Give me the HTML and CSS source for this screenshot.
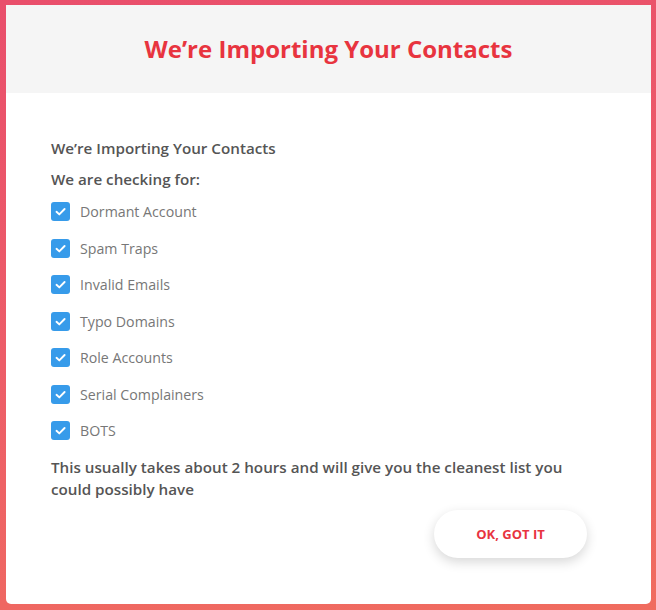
FILE: index.html
```html
<!DOCTYPE html>
<html>
<head>
<meta charset="utf-8">
<link rel="stylesheet" href="styles.css">
</head>
<body>
<div class="page">
  <div class="modal">
    <div class="modal-header">
      <h1 class="title">We’re Importing Your Contacts</h1>
    </div>
    <div class="modal-body">
      <p class="lead">We’re Importing Your Contacts</p>
      <p class="lead sub">We are checking for:</p>
      <ul class="checks">
        <li class="check"><span class="box"><svg viewBox="0 0 19 19" width="19" height="19"><path d="M5.5 9.8 L8.3 12.4 L13.6 7" fill="none" stroke="#fff" stroke-width="1.9" stroke-linecap="round" stroke-linejoin="round"/></svg></span>Dormant Account</li>
        <li class="check"><span class="box"><svg viewBox="0 0 19 19" width="19" height="19"><path d="M5.5 9.8 L8.3 12.4 L13.6 7" fill="none" stroke="#fff" stroke-width="1.9" stroke-linecap="round" stroke-linejoin="round"/></svg></span>Spam Traps</li>
        <li class="check"><span class="box"><svg viewBox="0 0 19 19" width="19" height="19"><path d="M5.5 9.8 L8.3 12.4 L13.6 7" fill="none" stroke="#fff" stroke-width="1.9" stroke-linecap="round" stroke-linejoin="round"/></svg></span>Invalid Emails</li>
        <li class="check"><span class="box"><svg viewBox="0 0 19 19" width="19" height="19"><path d="M5.5 9.8 L8.3 12.4 L13.6 7" fill="none" stroke="#fff" stroke-width="1.9" stroke-linecap="round" stroke-linejoin="round"/></svg></span>Typo Domains</li>
        <li class="check"><span class="box"><svg viewBox="0 0 19 19" width="19" height="19"><path d="M5.5 9.8 L8.3 12.4 L13.6 7" fill="none" stroke="#fff" stroke-width="1.9" stroke-linecap="round" stroke-linejoin="round"/></svg></span>Role Accounts</li>
        <li class="check"><span class="box"><svg viewBox="0 0 19 19" width="19" height="19"><path d="M5.5 9.8 L8.3 12.4 L13.6 7" fill="none" stroke="#fff" stroke-width="1.9" stroke-linecap="round" stroke-linejoin="round"/></svg></span>Serial Complainers</li>
        <li class="check"><span class="box"><svg viewBox="0 0 19 19" width="19" height="19"><path d="M5.5 9.8 L8.3 12.4 L13.6 7" fill="none" stroke="#fff" stroke-width="1.9" stroke-linecap="round" stroke-linejoin="round"/></svg></span>BOTS</li>
      </ul>
      <p class="note">This usually takes about 2 hours and will give you the cleanest list you could possibly have</p>
      <div class="actions">
        <button class="btn">OK, GOT IT</button>
      </div>
    </div>
  </div>
</div>
</body>
</html>
```
FILE: styles.css
```css
html, body {
  margin: 0;
  padding: 0;
}
body {
  width: 656px;
  height: 610px;
  overflow: hidden;
  font-family: "Open Sans", "DejaVu Sans", sans-serif;
  background: linear-gradient(170deg, #e94e6b 0%, #ed5d68 50%, #f06c5f 100%);
}
.page {
  padding: 5px 5px 6px 6px;
}
.modal {
  width: 645px;
  height: 599px;
  background: #fff;
  border-radius: 0 0 5px 5px;
  display: flex;
  flex-direction: column;
  overflow: hidden;
}
.modal-header {
  height: 88px;
  background: #f5f5f5;
  display: flex;
  align-items: center;
  justify-content: center;
}
.title {
  margin: 0;
  padding-bottom: 1px;
  font-size: 24px;
  font-weight: 700;
  color: #e8343f;
  line-height: 32px;
}
.modal-body {
  padding: 45px 64px 0 45px;
}
.lead {
  margin: 0;
  font-size: 15.2px;
  font-weight: 600;
  color: #555;
  line-height: 20px;
}
.lead.sub {
  margin-top: 11px;
}
.checks {
  list-style: none;
  margin: 13px 0 0;
  padding: 0;
  display: flex;
  flex-direction: column;
  gap: 17.5px;
}
.check {
  display: flex;
  align-items: center;
  height: 19px;
  font-size: 14.2px;
  color: #777;
}
.box {
  width: 19px;
  height: 19px;
  border-radius: 3px;
  background: #379bea;
  margin-right: 10px;
  display: flex;
}
.note {
  margin: 15.5px 0 0;
  font-size: 15.2px;
  font-weight: 600;
  color: #555;
  line-height: 22px;
}
.actions {
  display: flex;
  justify-content: flex-end;
  margin-top: 10px;
}
.btn {
  width: 153px;
  height: 48px;
  border: none;
  border-radius: 24px;
  background: #fff;
  box-shadow: 0 4px 12px rgba(0, 0, 0, 0.16);
  font-family: "Open Sans", "DejaVu Sans", sans-serif;
  font-size: 13px;
  font-weight: 700;
  color: #e8343f;
  letter-spacing: 0;
}
```
